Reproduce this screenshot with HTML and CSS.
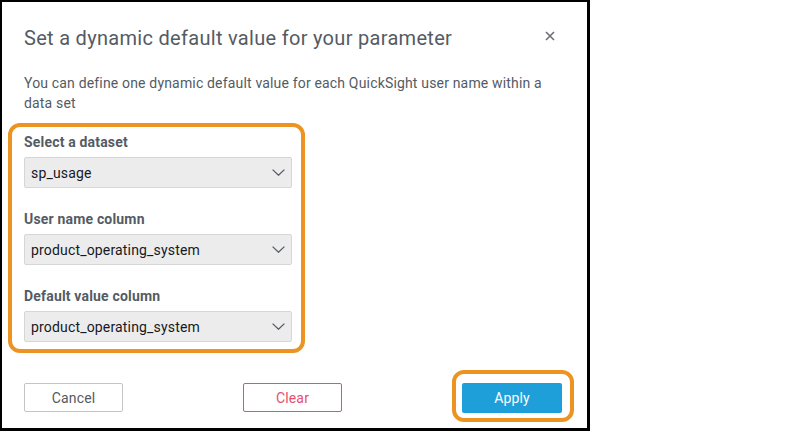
FILE: index.html
```html
<!DOCTYPE html>
<html lang="en">
<head>
<meta charset="utf-8">
<title>Set a dynamic default value</title>
<link rel="stylesheet" href="styles.css">
</head>
<body>
<div class="dialog">
  <div class="header">
    <h1 class="title">Set a dynamic default value for your parameter</h1>
    <button class="close" aria-label="Close">
      <svg width="10" height="10" viewBox="0 0 10 10"><path d="M1 1L9 9M9 1L1 9" stroke="#6b6f75" stroke-width="1.6" fill="none"/></svg>
    </button>
  </div>
  <p class="desc">You can define one dynamic default value for each QuickSight user name within a data set</p>
  <div class="fields">
    <div class="field">
      <div class="label">Select a dataset</div>
      <div class="select"><span>sp_usage</span>
        <svg class="chev" width="13" height="7" viewBox="0 0 13 7"><path d="M0.6 0.6L6.5 6.2L12.4 0.6" stroke="#545b64" stroke-width="1.3" fill="none"/></svg>
      </div>
    </div>
    <div class="field">
      <div class="label">User name column</div>
      <div class="select"><span>product_operating_system</span>
        <svg class="chev" width="13" height="7" viewBox="0 0 13 7"><path d="M0.6 0.6L6.5 6.2L12.4 0.6" stroke="#545b64" stroke-width="1.3" fill="none"/></svg>
      </div>
    </div>
    <div class="field">
      <div class="label">Default value column</div>
      <div class="select"><span>product_operating_system</span>
        <svg class="chev" width="13" height="7" viewBox="0 0 13 7"><path d="M0.6 0.6L6.5 6.2L12.4 0.6" stroke="#545b64" stroke-width="1.3" fill="none"/></svg>
      </div>
    </div>
  </div>
  <div class="footer">
    <button class="btn btn-cancel">Cancel</button>
    <button class="btn btn-clear">Clear</button>
    <div class="ring"><button class="btn btn-apply">Apply</button></div>
  </div>
</div>
</body>
</html>
```
FILE: styles.css
```css
html, body {
  margin: 0;
  padding: 0;
  background: #ffffff;
}
body {
  font-family: Roboto, "Liberation Sans", sans-serif;
  color: #545b64;
}
.dialog {
  box-sizing: border-box;
  width: 590px;
  height: 431px;
  border-style: solid;
  border-color: #000;
  border-width: 2px 3px 3px 2px;
  padding: 22px 12px 0 22px;
  overflow: hidden;
}
.header {
  display: flex;
  align-items: flex-start;
  justify-content: space-between;
}
.title {
  margin: 0;
  font-size: 20px;
  line-height: 28px;
  font-weight: 400;
  letter-spacing: 0.3px;
  color: #545b64;
}
.close {
  border: 0;
  background: none;
  padding: 0;
  margin: 7px 20px 0 0;
  width: 10px;
  height: 10px;
  display: flex;
}
.desc {
  margin: 22px 0 0 0;
  width: 540px;
  font-size: 14px;
  line-height: 19.5px;
  letter-spacing: 0.17px;
}
.fields {
  width: 268px;
  margin: 10px 0 0 -16px;
  padding: 5px 9px 7px 12px;
  border: 4px solid #ec9322;
  border-radius: 12px;
  display: flex;
  flex-direction: column;
  gap: 21px;
}
.field {
  display: flex;
  flex-direction: column;
  gap: 5px;
}
.label {
  font-size: 14px;
  line-height: 20px;
  font-weight: 700;
  letter-spacing: 0.18px;
  color: #545b64;
}
.select {
  box-sizing: border-box;
  height: 31px;
  display: flex;
  align-items: center;
  justify-content: space-between;
  padding: 0 6px 0 6px;
  background: #ececec;
  border: 1px solid #d6d6d6;
  border-radius: 2px;
  font-size: 14px;
  letter-spacing: 0.17px;
  color: #16191f;
}
.chev {
  display: block;
}
.footer {
  display: flex;
  align-items: flex-start;
  margin-top: 17px;
}
.btn {
  box-sizing: border-box;
  font-family: Roboto, "Liberation Sans", sans-serif;
  font-size: 14px;
  letter-spacing: 0.17px;
  border-radius: 2px;
  padding: 0;
  cursor: pointer;
}
.btn-cancel {
  margin-top: 13px;
  width: 99px;
  height: 29px;
  background: #fff;
  border: 1px solid #c4c4c4;
  color: #545b64;
}
.btn-clear {
  margin: 13px 0 0 120px;
  width: 99px;
  height: 29px;
  background: #fff;
  border: 1px solid #e6506f;
  color: #e6506f;
}
.ring {
  margin-left: 110px;
  padding: 9px 8px 5px 6px;
  border: 4px solid #ec9322;
  border-radius: 12px;
  display: flex;
}
.btn-apply {
  width: 100px;
  height: 30px;
  background: #1f9fd9;
  border: 0;
  color: #fff;
}
```
